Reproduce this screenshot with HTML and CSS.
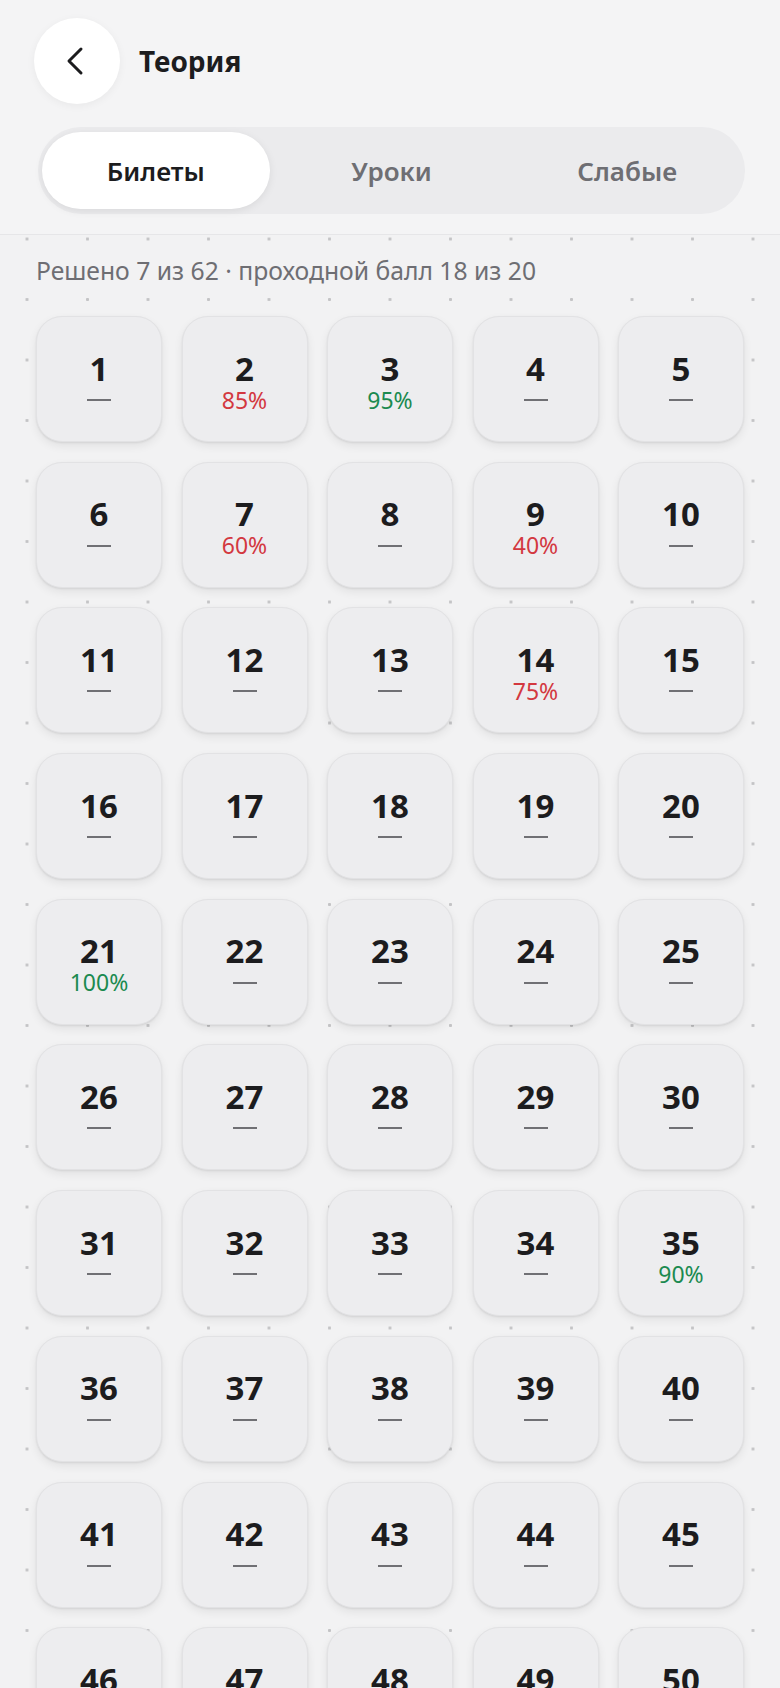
FILE: index.html
```html
<!DOCTYPE html>
<html lang="ru">
<head>
  <meta charset="UTF-8" />
  <title>Теория</title>
  <meta name="viewport" content="width=device-width, initial-scale=1.0" />
  <link rel="stylesheet" href="styles.css">
</head>
<body>
  <header class="topbar">
    <button class="back-btn" aria-label="Назад">
      <svg width="24" height="32" viewBox="0 0 24 32" fill="none">
        <path d="M16 4 L4 16 L16 28" stroke="#1c1c1e" stroke-width="3" stroke-linecap="round" stroke-linejoin="round"/>
      </svg>
    </button>
    <h1 class="title">Теория</h1>
  </header>

  <nav class="tabs">
    <button class="tab active">Билеты</button>
    <button class="tab">Уроки</button>
    <button class="tab">Слабые</button>
  </nav>

  <main class="board">
    <p class="summary">Решено 7 из 62 · проходной балл 18 из 20</p>
    <div class="tickets">
      <div class="ticket"><span class="num">1</span><span class="res"><i class="dash"></i></span></div>
      <div class="ticket"><span class="num">2</span><span class="res bad">85%</span></div>
      <div class="ticket"><span class="num">3</span><span class="res good">95%</span></div>
      <div class="ticket"><span class="num">4</span><span class="res"><i class="dash"></i></span></div>
      <div class="ticket"><span class="num">5</span><span class="res"><i class="dash"></i></span></div>
      <div class="ticket"><span class="num">6</span><span class="res"><i class="dash"></i></span></div>
      <div class="ticket"><span class="num">7</span><span class="res bad">60%</span></div>
      <div class="ticket"><span class="num">8</span><span class="res"><i class="dash"></i></span></div>
      <div class="ticket"><span class="num">9</span><span class="res bad">40%</span></div>
      <div class="ticket"><span class="num">10</span><span class="res"><i class="dash"></i></span></div>
      <div class="ticket"><span class="num">11</span><span class="res"><i class="dash"></i></span></div>
      <div class="ticket"><span class="num">12</span><span class="res"><i class="dash"></i></span></div>
      <div class="ticket"><span class="num">13</span><span class="res"><i class="dash"></i></span></div>
      <div class="ticket"><span class="num">14</span><span class="res bad">75%</span></div>
      <div class="ticket"><span class="num">15</span><span class="res"><i class="dash"></i></span></div>
      <div class="ticket"><span class="num">16</span><span class="res"><i class="dash"></i></span></div>
      <div class="ticket"><span class="num">17</span><span class="res"><i class="dash"></i></span></div>
      <div class="ticket"><span class="num">18</span><span class="res"><i class="dash"></i></span></div>
      <div class="ticket"><span class="num">19</span><span class="res"><i class="dash"></i></span></div>
      <div class="ticket"><span class="num">20</span><span class="res"><i class="dash"></i></span></div>
      <div class="ticket"><span class="num">21</span><span class="res good">100%</span></div>
      <div class="ticket"><span class="num">22</span><span class="res"><i class="dash"></i></span></div>
      <div class="ticket"><span class="num">23</span><span class="res"><i class="dash"></i></span></div>
      <div class="ticket"><span class="num">24</span><span class="res"><i class="dash"></i></span></div>
      <div class="ticket"><span class="num">25</span><span class="res"><i class="dash"></i></span></div>
      <div class="ticket"><span class="num">26</span><span class="res"><i class="dash"></i></span></div>
      <div class="ticket"><span class="num">27</span><span class="res"><i class="dash"></i></span></div>
      <div class="ticket"><span class="num">28</span><span class="res"><i class="dash"></i></span></div>
      <div class="ticket"><span class="num">29</span><span class="res"><i class="dash"></i></span></div>
      <div class="ticket"><span class="num">30</span><span class="res"><i class="dash"></i></span></div>
      <div class="ticket"><span class="num">31</span><span class="res"><i class="dash"></i></span></div>
      <div class="ticket"><span class="num">32</span><span class="res"><i class="dash"></i></span></div>
      <div class="ticket"><span class="num">33</span><span class="res"><i class="dash"></i></span></div>
      <div class="ticket"><span class="num">34</span><span class="res"><i class="dash"></i></span></div>
      <div class="ticket"><span class="num">35</span><span class="res good">90%</span></div>
      <div class="ticket"><span class="num">36</span><span class="res"><i class="dash"></i></span></div>
      <div class="ticket"><span class="num">37</span><span class="res"><i class="dash"></i></span></div>
      <div class="ticket"><span class="num">38</span><span class="res"><i class="dash"></i></span></div>
      <div class="ticket"><span class="num">39</span><span class="res"><i class="dash"></i></span></div>
      <div class="ticket"><span class="num">40</span><span class="res"><i class="dash"></i></span></div>
      <div class="ticket"><span class="num">41</span><span class="res"><i class="dash"></i></span></div>
      <div class="ticket"><span class="num">42</span><span class="res"><i class="dash"></i></span></div>
      <div class="ticket"><span class="num">43</span><span class="res"><i class="dash"></i></span></div>
      <div class="ticket"><span class="num">44</span><span class="res"><i class="dash"></i></span></div>
      <div class="ticket"><span class="num">45</span><span class="res"><i class="dash"></i></span></div>
      <div class="ticket"><span class="num">46</span><span class="res"><i class="dash"></i></span></div>
      <div class="ticket"><span class="num">47</span><span class="res"><i class="dash"></i></span></div>
      <div class="ticket"><span class="num">48</span><span class="res"><i class="dash"></i></span></div>
      <div class="ticket"><span class="num">49</span><span class="res"><i class="dash"></i></span></div>
      <div class="ticket"><span class="num">50</span><span class="res"><i class="dash"></i></span></div>
    </div>
  </main>
</body>
</html>
```

FILE: styles.css
```css
body {
  margin: 0;
  background: #f4f4f5;
  color: #1c1c1e;
  font-family: "Noto Sans", "Open Sans", sans-serif;
  overflow: hidden;
}

.topbar {
  display: flex;
  align-items: center;
  gap: 19px;
  padding: 18px 34px 0;
}

.back-btn {
  width: 86px;
  height: 86px;
  border: none;
  border-radius: 50%;
  background: #fff;
  box-shadow: 0 2px 8px rgba(0, 0, 0, 0.05);
  display: flex;
  align-items: center;
  justify-content: center;
  padding: 0;
}

.title {
  margin: 0;
  font-size: 28px;
  font-weight: 700;
}

.tabs {
  display: grid;
  grid-template-columns: repeat(3, 1fr);
  gap: 8px;
  margin: 23px 35px 0 38px;
  padding: 5px 4px;
  background: #ebebed;
  border-radius: 44px;
}

.tab {
  height: 77px;
  border: none;
  border-radius: 39px;
  background: transparent;
  font-family: inherit;
  font-size: 26px;
  font-weight: 600;
  color: #6e6e73;
}

.tab.active {
  background: #fff;
  color: #1c1c1e;
  box-shadow: 0 2px 8px rgba(0, 0, 0, 0.08);
}

.board {
  margin-top: 20px;
  border-top: 1px solid #e6e6e8;
  background-color: #f2f2f3;
  background-image: radial-gradient(circle, #c4c4c6 1.3px, transparent 1.8px);
  background-size: 60.5px 60.5px;
  background-position: -3.25px -26.25px;
  padding: 21px 36px 40px;
}

.summary {
  margin: 0 0 30px;
  font-size: 24.7px;
  line-height: 30px;
  color: #6e6e73;
}

.tickets {
  display: grid;
  grid-template-columns: repeat(5, 126px);
  column-gap: 19.5px;
  row-gap: 19.7px;
}

.ticket {
  height: 126px;
  box-sizing: border-box;
  padding-top: 5px;
  border: 1px solid #e2e2e4;
  border-radius: 26px;
  background: #ededef;
  box-shadow: 0 4px 10px rgba(0, 0, 0, 0.07), 0 1px 2px rgba(0, 0, 0, 0.08);
  display: flex;
  flex-direction: column;
  align-items: center;
  justify-content: center;
}

.num {
  font-size: 33px;
  font-weight: 700;
  line-height: 37px;
}

.res {
  height: 27px;
  font-size: 23px;
  line-height: 27px;
  display: flex;
  align-items: center;
}

.res.bad {
  color: #d3383f;
}

.res.good {
  color: #1b8a50;
}

.dash {
  width: 24px;
  height: 2px;
  background: #707074;
}
```
